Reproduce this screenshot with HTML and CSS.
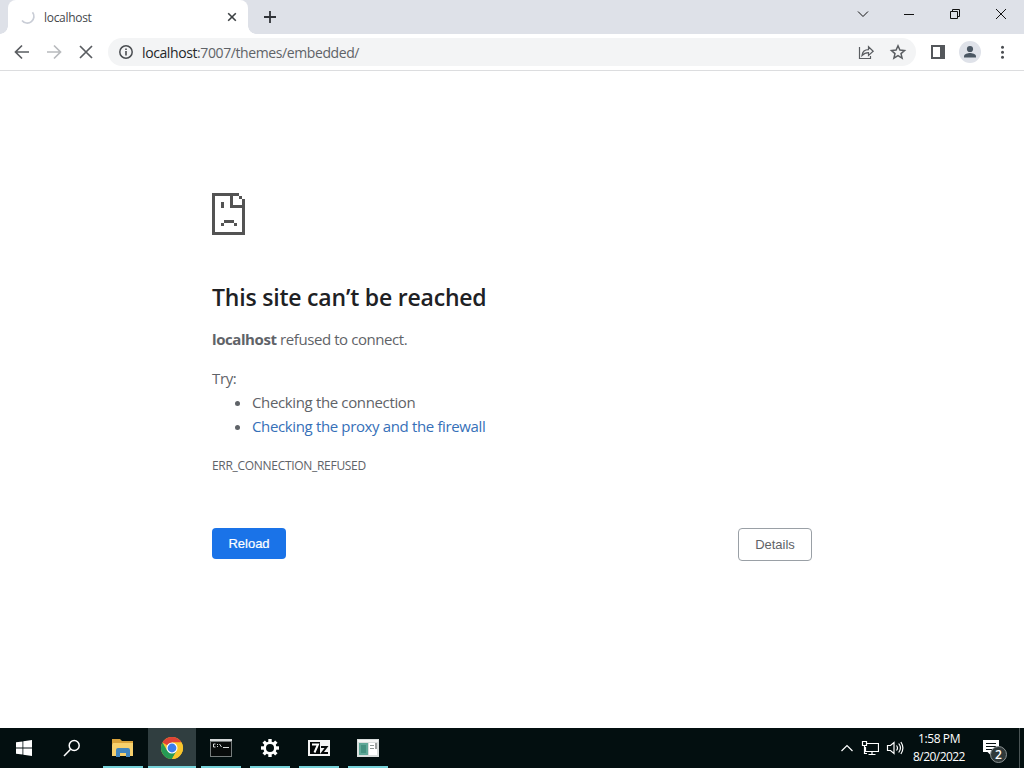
FILE: index.html
```html
<!DOCTYPE html>
<html lang="en">
<head>
  <meta charset="UTF-8">
  <meta name="viewport" content="width=device-width, initial-scale=1.0">
  <title>localhost</title>
  <link rel="stylesheet" href="styles.css">
</head>
<body>
  <div class="screen">
    <div class="tab-strip">
      <div class="tab">
        <svg class="spinner" width="16" height="16" viewBox="0 0 16 16" fill="none" stroke="#c9cdd6" stroke-width="1.7"><path d="M12.500 3.200A6.500 6.500 0 0 1 2 11.500"/></svg>
        <span class="tab-title">localhost</span>
        <svg width="16" height="16" viewBox="0 0 16 16" stroke="#3c4043" stroke-width="1.6"><path d="M4.200 4.200l7.600 7.600M11.800 4.200l-7.600 7.600"/></svg>
      </div>
      <button class="new-tab" aria-label="New tab">
        <svg width="14" height="14" viewBox="0 0 14 14" stroke="#303338" stroke-width="1.8"><path d="M7 1v12M1 7h12"/></svg>
      </button>
      <div class="window-controls">
        <svg width="46" height="28" viewBox="0 0 46 28"><path d="M18 11.500l5 5 5-5"/></svg>
        <svg width="46" height="28" viewBox="0 0 46 28"><path d="M18 14.500h10"/></svg>
        <svg width="46" height="28" viewBox="0 0 46 28"><path d="M18.500 11.500h7v7h-7zM20.500 11v-1.500h7v7h-1.500"/></svg>
        <svg width="46" height="28" viewBox="0 0 46 28"><path d="M18 9l10 10M28 9l-10 10"/></svg>
      </div>
    </div>

    <div class="toolbar">
      <div class="nav">
        <svg class="icon" width="32" height="32" viewBox="0 0 32 32"><path d="M23 16H10M16 9.500L9.500 16l6.500 6.500"/></svg>
        <svg class="icon disabled" width="32" height="32" viewBox="0 0 32 32"><path d="M9 16h13M16 9.500l6.500 6.500l-6.500 6.500"/></svg>
        <svg class="icon" width="32" height="32" viewBox="0 0 32 32"><path d="M10 10l12 12M22 10L10 22"/></svg>
      </div>
      <div class="omnibox">
        <svg width="16" height="16" viewBox="0 0 16 16"><circle cx="8" cy="8" r="6.200" fill="none" stroke="#4a4d51" stroke-width="1.500"/><path d="M7.200 7h1.600v4.500H7.200zM7.200 4.400h1.600V6H7.200z" fill="#4a4d51"/></svg>
        <span class="url"><span class="host">localhost</span>:7007/themes/embedded/</span>
        <svg class="icon thin" width="32" height="28" viewBox="0 0 32 28"><path d="M9.500 9v11.500h11V18M12 17.500c.5-3.800 3.200-5.800 6.500-5.800V8.700l4.700 4.500-4.700 4.300v-2.900c-2.600 0-4.700.9-6.500 2.900z"/></svg>
        <svg class="icon star" width="32" height="28" viewBox="0 0 32 28"><path d="M16 7.800l1.900 4.300 4.600.4-3.500 3.100 1.100 4.500-4.100-2.400-4.100 2.400 1.100-4.500-3.500-3.100 4.600-.4z"/></svg>
      </div>
      <div class="actions">
        <svg width="32" height="32" viewBox="0 0 32 32"><path fill="#54575b" d="M9 9h14v14H9z"/><path fill="#fff" d="M11 11h7v10h-7z"/></svg>
        <svg width="32" height="32" viewBox="0 0 32 32"><circle cx="16" cy="16" r="11" fill="#dfe2e9"/><circle cx="16" cy="13" r="3.100" fill="#4b5763"/><path d="M10 21.500v-1.300c0-2.100 4-3.200 6-3.200s6 1.100 6 3.200v1.300z" fill="#4b5763"/></svg>
        <svg width="32" height="32" viewBox="0 0 32 32" fill="#4a4d51"><circle cx="16.500" cy="11.300" r="1.500"/><circle cx="16.500" cy="16.300" r="1.500"/><circle cx="16.500" cy="21.300" r="1.500"/></svg>
      </div>
    </div>

    <main class="page">
      <div class="error-box">
        <svg class="sad-page" width="33" height="42" viewBox="0 0 33 42" shape-rendering="crispEdges">
          <path fill="#535353" fill-rule="evenodd" d="M0 0h27v3h3v3h3v36H0zM3 3v36h27V15H18V3zM21 3v9h9V6h-3V3z"/>
          <path fill="#535353" d="M9 9h3v6H9zM12 27h10v3H12zM9 30h3v3H9zM22 30h3v3h-3z"/>
        </svg>
        <h1 class="title">This site can’t be reached</h1>
        <p class="summary"><strong>localhost</strong> <span>refused to connect.</span></p>
        <p class="try">Try:</p>
        <ul class="suggestions">
          <li>Checking the connection</li>
          <li><a class="link" href="#">Checking the proxy and the firewall</a></li>
        </ul>
        <div class="error-code">ERR_CONNECTION_REFUSED</div>
        <div class="buttons">
          <button class="button primary">Reload</button>
          <button class="button secondary">Details</button>
        </div>
      </div>
    </main>

    <div class="taskbar">
      <div class="system-button">
        <svg width="16" height="16" viewBox="0 0 16 16" fill="#fff"><path d="M0 2.300l6.500-.9v6.100H0zM7.300 1.300L16 0v7.500H7.300zM0 8.400h6.500v6.200L0 13.700zM7.300 8.400H16V16l-8.700-1.300z"/></svg>
      </div>
      <div class="system-button">
        <svg width="18" height="18" viewBox="0 0 18 18" fill="none" stroke="#fff" stroke-width="1.500"><circle cx="11.200" cy="6.500" r="5"/><path d="M7.600 10.200L1 17"/></svg>
      </div>
      <div class="apps">
        <div class="app">
          <svg width="22" height="20" viewBox="0 0 22 20"><path d="M0 1h8l2 2h11v15H0z" fill="#d9a33b"/><path d="M1 5h20v13H0V7z" fill="#f7d06c"/><path d="M4 19v-7q0-2 2-2h10q2 0 2 2v7h-4v-4H8v4z" fill="#4285bd"/></svg>
        </div>
        <div class="app active">
          <svg width="24" height="24" viewBox="0 0 24 24"><circle cx="12" cy="12" r="11" fill="#f9c52c"/><path d="M12 12L2.470 6.500A11 11 0 0 1 21.530 6.500H12z" fill="#df4336"/><path d="M2.470 6.500A11 11 0 0 0 12 23L16.760 14.750L12 12L7.240 14.750z" fill="#259b55"/><path d="M12 6.500h9.530A11 11 0 0 1 12 23l4.760-8.250z" fill="#f9c52c"/><circle cx="12" cy="12" r="5.500" fill="#fff"/><circle cx="12" cy="12" r="4.400" fill="#3b7ded"/></svg>
        </div>
        <div class="app">
          <svg width="22" height="18" viewBox="0 0 22 18"><path fill="#777d7d" d="M0 0h22v18H0z"/><path fill="#d5d8d9" d="M0 0h22v2H0z"/><path fill="#080b0b" d="M1 3h20v14H1z"/><path d="M5.500 5H3.500v3h2M7.500 5v1M7.500 7v1M9.500 5l2 3M13 8.500h6" fill="none" stroke="#d5d9d9"/></svg>
        </div>
        <div class="app">
          <svg width="18" height="18" viewBox="-9 -9 18 18"><g fill="#fff"><path id="tooth" d="M-1.700-9h3.400v4h-3.400z"/><use href="#tooth" transform="rotate(45)"/><use href="#tooth" transform="rotate(90)"/><use href="#tooth" transform="rotate(135)"/><use href="#tooth" transform="rotate(180)"/><use href="#tooth" transform="rotate(225)"/><use href="#tooth" transform="rotate(270)"/><use href="#tooth" transform="rotate(315)"/></g><circle r="5.300" fill="none" stroke="#fff" stroke-width="2.600"/></svg>
        </div>
        <div class="app">
          <svg width="22" height="16" viewBox="0 0 22 16"><path fill="#f4f4f4" d="M0 0h22v16H0z"/><path fill="#050808" d="M2 2h10v12H2z"/><path d="M4 4.500h6L6.500 12.500" fill="none" stroke="#fff" stroke-width="2"/><path d="M13 7h5.500l-4.500 6H20" fill="none" stroke="#050808" stroke-width="2"/></svg>
        </div>
        <div class="app">
          <svg width="22" height="18" viewBox="0 0 22 18"><path fill="#d9dedd" d="M0 0h22v18H0z"/><path fill="#f4f5f4" d="M1 1h20v2H1z"/><path fill="#5fa797" d="M2 4h9v12H2z"/><path fill="#449180" d="M4 6h5v8H4z"/><path fill="#fff" d="M12 4h8v12h-8z"/><path d="M13 6.500h4M13 9.500h4" stroke="#8b9692"/><path d="M19 4v6" stroke="#3c4442"/></svg>
        </div>
      </div>
      <div class="tray">
        <svg width="14" height="16" viewBox="0 0 14 16"><path d="M1.500 11L7 5.500l5.500 5.500"/></svg>
        <svg width="18" height="16" viewBox="0 0 18 16"><path d="M6 3.500h11.500v8H4.500V7M11 11.500v3M7.500 14.500h7M1.500 1.500h4v4h-4zM3.500 5.500v8H6"/></svg>
        <svg width="18" height="16" viewBox="0 0 18 16"><path d="M1.500 5.500h3L8 2.500v11l-3.500-3h-3zM10.500 5.500q2 2.500 0 5M12.700 3.500q3.500 4.500 0 9M14.900 2q4 6 0 12"/></svg>
      </div>
      <div class="clock">
        <div class="time">1:58 PM</div>
        <div class="date">8/20/2022</div>
      </div>
      <div class="notifications">
        <svg width="17" height="16" viewBox="0 0 17 16"><path d="M0 0h16v12H8.500v4l-4-4H0z" fill="#fff"/><path d="M3 3.500h10M3 6.500h10M3 9.500h7" stroke="#071012"/></svg>
        <span class="badge">2</span>
      </div>
      <div class="show-desktop"></div>
    </div>
  </div>
</body>
</html>
```

FILE: styles.css
```css
* {
  box-sizing: border-box;
  margin: 0;
  padding: 0;
}

body {
  font-family: "Open Sans", "Noto Sans", sans-serif;
  background-color: #fff;
  color: #5f6368;
}

svg {
  display: block;
  flex-shrink: 0;
}

.screen {
  display: flex;
  flex-direction: column;
  width: 1024px;
  height: 768px;
  overflow: hidden;
}

/* Tabs */
.tab-strip {
  display: flex;
  height: 34px;
  padding-left: 8px;
  background-color: #dee1e8;
  background-image: radial-gradient(circle at 100% 0, transparent 7.5px, #fff 8px), radial-gradient(circle at 0 0, transparent 7.5px, #fff 8px);
  background-position: 248px 26px, 0 26px;
  background-size: 8px 8px;
  background-repeat: no-repeat;
}

.tab {
  display: flex;
  align-items: center;
  width: 240px;
  padding: 0 8px 0 12px;
  background-color: #fff;
  border-radius: 8px 8px 0 0;
}

.tab-title {
  flex: 1;
  margin-left: 8px;
  font-size: 12px;
  letter-spacing: -0.3px;
  color: #45484c;
}

.new-tab {
  width: 28px;
  height: 34px;
  margin-left: 8px;
  padding-left: 7px;
  border: none;
  background: none;
}

.window-controls {
  display: flex;
  margin-left: auto;
  fill: none;
  stroke: #111;
  stroke-width: 1;
}

/* Toolbar */
.toolbar {
  display: flex;
  align-items: center;
  height: 37px;
  padding: 0 6px;
  background-color: #fff;
  border-bottom: 1px solid #dcdddf;
}

.nav,
.actions {
  display: flex;
}

.icon {
  fill: none;
  stroke: #5a5d61;
  stroke-width: 1.7;
}

.icon.thin {
  stroke-width: 1.2;
}

.icon.star {
  stroke-width: 1.5;
}

.icon.disabled {
  stroke: #b8babd;
}

.omnibox {
  display: flex;
  align-items: center;
  flex: 1;
  height: 28px;
  margin: 0 6px;
  padding: 0 2px 0 10px;
  background-color: #f3f4f5;
  border-radius: 14px;
}

.url {
  flex: 1;
  margin-left: 8px;
  padding-top: 1px;
  font-size: 14px;
  line-height: 20px;
  letter-spacing: -0.4px;
}

.host {
  color: #24272a;
}

/* Error page */
.page {
  flex: 1;
}

.error-box {
  width: 600px;
  margin: 122px auto 0;
  font-size: 15px;
  line-height: 24px;
  letter-spacing: -0.36px;
}

.title {
  margin-top: 45px;
  font-size: 23px;
  font-weight: 600;
  line-height: 34px;
  letter-spacing: -0.2px;
  color: #202124;
}

.summary {
  margin-top: 13px;
  letter-spacing: -0.42px;
}

.try {
  margin-top: 15px;
}

.suggestions {
  padding-left: 40px;
}

.link {
  color: #3670b8;
  text-decoration: none;
}

.error-code {
  margin-top: 16px;
  font-size: 12px;
  letter-spacing: -0.3px;
}

.buttons {
  display: flex;
  justify-content: space-between;
  align-items: flex-start;
  margin-top: 50px;
}

.button {
  width: 74px;
  height: 31px;
  border: none;
  border-radius: 4px;
  font-family: "Liberation Sans", Arial, sans-serif;
  font-size: 13px;
}

.primary {
  background-color: #1a73e8;
  color: #fff;
  -webkit-text-stroke: 0.2px #fff;
}

.secondary {
  height: 33px;
  border: 1px solid #9aa0a6;
  background-color: #fff;
  color: #5f6368;
}

/* Taskbar */
.taskbar {
  display: flex;
  height: 40px;
  background-color: #030f10;
  color: #fff;
}

.system-button {
  display: flex;
  align-items: center;
  justify-content: center;
  width: 48px;
}

.apps {
  display: flex;
  gap: 1px;
  margin-left: 3px;
}

.app {
  display: flex;
  align-items: center;
  justify-content: center;
  width: 48px;
  background: linear-gradient(#76d2d9, #76d2d9) center bottom / 40px 2px no-repeat;
}

.app.active {
  background-color: #303e40;
  background-size: 48px 2px;
}

.tray {
  display: flex;
  align-items: center;
  gap: 7px;
  margin-left: auto;
  fill: none;
  stroke: #fff;
  stroke-width: 1.2;
}

.clock {
  width: 70px;
  padding-top: 2px;
  font-size: 12px;
  line-height: 18px;
  text-align: center;
  white-space: nowrap;
}

.time {
  letter-spacing: -0.4px;
}

.date {
  letter-spacing: -0.55px;
}

.notifications {
  position: relative;
  width: 45px;
  padding: 12px 0 0 9px;
}

.badge {
  position: absolute;
  top: 18px;
  left: 16px;
  width: 17px;
  height: 17px;
  border: 1px solid #8b9293;
  border-radius: 50%;
  background-color: #30393a;
  font-size: 12px;
  font-weight: 600;
  line-height: 15px;
  text-align: center;
}

.show-desktop {
  width: 5px;
  border-left: 1px solid #4a5455;
}
```
